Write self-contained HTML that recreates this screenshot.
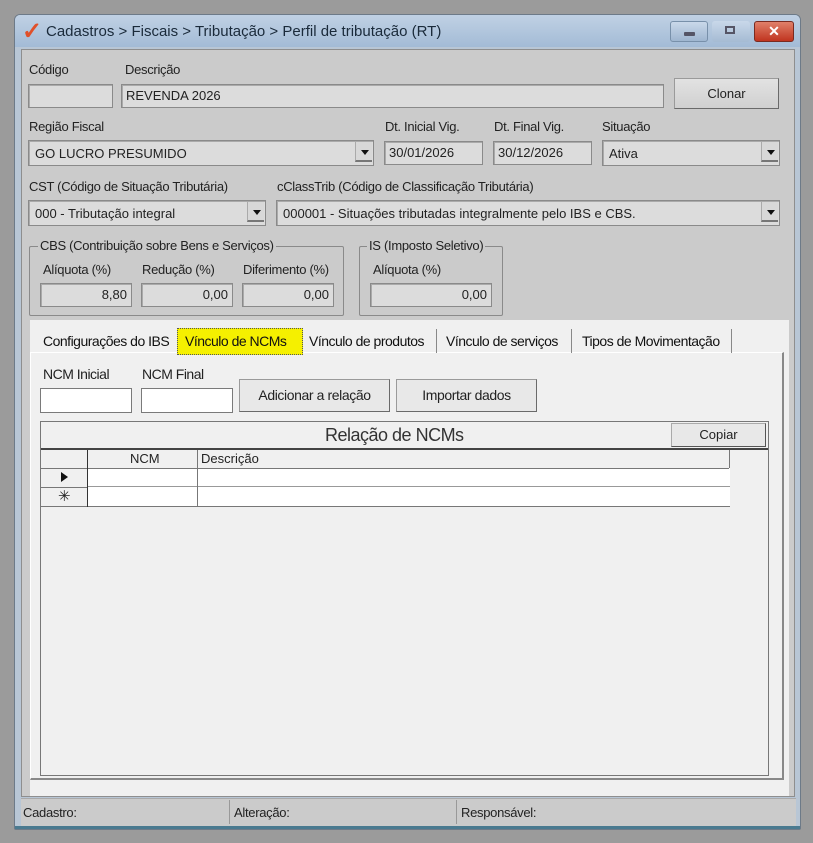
<!DOCTYPE html>
<html><head><meta charset="utf-8"><style>
*{box-sizing:border-box;margin:0;padding:0}
body{width:813px;height:843px;background:#9b9b9b;position:relative;overflow:hidden;font-family:"Liberation Sans",Arial,sans-serif;font-size:13px;color:#222}
.a{position:absolute}
.win{left:14px;top:14px;width:787px;height:816px;background:#b8c6d5;border:1px solid #6d7a88;border-radius:6px 6px 2px 2px}
.title{left:15px;top:15px;width:785px;height:32px;background:linear-gradient(#c0d1e4,#a3bbd6);border-radius:5px 5px 0 0}
.panel{left:21px;top:49px;width:774px;height:748px;background:#cbcbcb;border:1px solid #8e8e8e}
.lbl{font-size:13px;color:#222;letter-spacing:-0.3px}
.inp{background:#dcdcdc;border:1px solid #8a8a8a;box-shadow:inset 1px 1px 0 #aaa;height:24px;padding:3px 4px;font-size:13px}
.btn{background:linear-gradient(#e2e2e2,#d0d0d0);border:1px solid #9a9a9a;border-right-color:#6a6a6a;border-bottom-color:#6a6a6a;text-align:center;font-size:13px}
.dd{position:absolute;right:1px;top:1px;width:17px;height:20px;background:#d8d8d8;border-left:1px solid #aaa;border-bottom:2px solid #777}
.dd:after{content:"";position:absolute;left:5px;top:8px;border:4px solid transparent;border-top:5px solid #111}
.grp{border:1px solid #8a8a8a;border-radius:2px}
.gt{background:#cbcbcb;padding:0 2px;font-size:13px;letter-spacing:-0.3px}
.w{background:#fff;border:1px solid #7a7a7a;height:25px}
.tab{top:329px;height:24px;font-size:14px;padding:4px 5px;color:#111;border-right:1px solid #888;letter-spacing:-0.5px}
</style></head><body>
<div class="a win"></div>
<div class="a title"></div>
<div class="a" style="left:22px;top:20px;color:#e0502a;font-size:24px;font-weight:bold;line-height:24px">✓</div>
<div class="a" style="left:46px;top:23px;font-size:15px;color:#1a2a3a">Cadastros &gt; Fiscais &gt; Tributação &gt; Perfil de tributação (RT)</div>
<div class="a" style="left:670px;top:21px;width:38px;height:21px;border:1px solid #7890aa;border-radius:3px;background:linear-gradient(#c9d8ea,#9fb6d0)"><div class="a" style="left:13px;top:10px;width:11px;height:4px;background:#556;border-radius:1px"></div></div>
<div class="a" style="left:712px;top:21px;width:38px;height:21px;border-radius:3px;background:linear-gradient(#c9d8ea,#a5bbd3)"><div class="a" style="left:13px;top:5px;width:10px;height:8px;border:2px solid #556"></div></div>
<div class="a" style="left:754px;top:21px;width:40px;height:21px;border:1px solid #7a2a20;border-radius:3px;background:linear-gradient(#e0806a,#c0341f);color:#fff;font-weight:bold;text-align:center;font-size:14px;line-height:19px">✕</div>
<div class="a panel"></div>

<div class="a lbl" style="left:29px;top:62px">Código</div>
<div class="a lbl" style="left:125px;top:62px">Descrição</div>
<div class="a inp" style="left:28px;top:84px;width:85px"></div>
<div class="a inp" style="left:121px;top:84px;width:543px">REVENDA 2026</div>
<div class="a btn" style="left:674px;top:78px;width:105px;height:31px;line-height:29px">Clonar</div>

<div class="a lbl" style="left:29px;top:119px">Região Fiscal</div>
<div class="a lbl" style="left:385px;top:119px">Dt. Inicial Vig.</div>
<div class="a lbl" style="left:494px;top:119px">Dt. Final Vig.</div>
<div class="a lbl" style="left:602px;top:119px">Situação</div>
<div class="a inp" style="left:28px;top:140px;width:346px;height:26px;padding:5px 6px">GO LUCRO PRESUMIDO<div class="dd"></div></div>
<div class="a inp" style="left:384px;top:141px;width:99px">30/01/2026</div>
<div class="a inp" style="left:493px;top:141px;width:99px">30/12/2026</div>
<div class="a inp" style="left:602px;top:140px;width:178px;height:26px;padding:5px 6px">Ativa<div class="dd"></div></div>

<div class="a lbl" style="left:29px;top:179px">CST (Código de Situação Tributária)</div>
<div class="a lbl" style="left:277px;top:179px">cClassTrib (Código de Classificação Tributária)</div>
<div class="a inp" style="left:28px;top:200px;width:238px;height:26px;padding:5px 6px">000 - Tributação integral<div class="dd"></div></div>
<div class="a inp" style="left:276px;top:200px;width:504px;height:26px;padding:5px 6px">000001 - Situações tributadas integralmente pelo IBS e CBS.<div class="dd"></div></div>

<div class="a grp" style="left:29px;top:246px;width:315px;height:70px"></div>
<div class="a gt" style="left:38px;top:238px">CBS (Contribuição sobre Bens e Serviços)</div>
<div class="a grp" style="left:359px;top:246px;width:144px;height:70px"></div>
<div class="a gt" style="left:367px;top:238px">IS (Imposto Seletivo)</div>
<div class="a lbl" style="left:43px;top:262px">Alíquota (%)</div>
<div class="a lbl" style="left:142px;top:262px">Redução (%)</div>
<div class="a lbl" style="left:243px;top:262px">Diferimento (%)</div>
<div class="a lbl" style="left:373px;top:262px">Alíquota (%)</div>
<div class="a inp" style="left:40px;top:283px;width:92px;text-align:right">8,80</div>
<div class="a inp" style="left:141px;top:283px;width:92px;text-align:right">0,00</div>
<div class="a inp" style="left:242px;top:283px;width:92px;text-align:right">0,00</div>
<div class="a inp" style="left:370px;top:283px;width:122px;text-align:right">0,00</div>

<div class="a" style="left:30px;top:320px;width:759px;height:476px;background:#f0f0f0"></div>
<div class="a" style="left:30px;top:352px;width:754px;height:428px;background:#f0f0f0;border:1px solid #fff;border-right:2px solid #888;border-bottom:2px solid #888"></div>
<div class="a tab" style="left:38px;border:none">Configurações do IBS</div>
<div class="a tab" style="left:177px;top:328px;height:27px;width:126px;background:#f5f000;border:1px dotted #555;padding:4px 7px">Vínculo de NCMs</div>
<div class="a tab" style="left:304px;width:133px">Vínculo de produtos</div>
<div class="a tab" style="left:441px;width:131px">Vínculo de serviços</div>
<div class="a tab" style="left:577px;width:155px">Tipos de Movimentação</div>
<div class="a" style="left:436px;top:331px;width:1px;height:22px;background:#888"></div>

<div class="a" style="left:43px;top:366px;font-size:14px;letter-spacing:-0.5px">NCM Inicial</div>
<div class="a" style="left:142px;top:366px;font-size:14px;letter-spacing:-0.5px">NCM Final</div>
<div class="a w" style="left:40px;top:388px;width:92px"></div>
<div class="a w" style="left:141px;top:388px;width:92px"></div>
<div class="a btn" style="left:239px;top:379px;width:151px;height:33px;line-height:31px;background:#e8e8e8;font-size:14px;letter-spacing:-0.4px">Adicionar a relação</div>
<div class="a btn" style="left:396px;top:379px;width:141px;height:33px;line-height:31px;background:#e8e8e8;font-size:14px;letter-spacing:-0.4px">Importar dados</div>

<div class="a" style="left:40px;top:421px;width:729px;height:355px;border:1px solid #777;background:#f0f0f0"></div>
<div class="a" style="left:41px;top:448px;width:727px;height:2px;background:#444"></div>
<div class="a" style="left:325px;top:425px;font-size:18px;color:#333;letter-spacing:-0.5px">Relação de NCMs</div>
<div class="a btn" style="left:671px;top:423px;width:95px;height:24px;line-height:22px;background:#e8e8e8;border-color:#aaa #555 #555 #aaa">Copiar</div>
<div class="a" style="left:41px;top:450px;width:689px;height:57px;border-right:1px solid #777;border-bottom:1px solid #777"></div>
<div class="a" style="left:88px;top:468px;width:642px;height:38px;background:#fff"></div>
<div class="a" style="left:88px;top:486px;width:642px;height:1px;background:#999"></div>
<div class="a" style="left:41px;top:468px;width:688px;height:1px;background:#777"></div>
<div class="a" style="left:41px;top:487px;width:47px;height:1px;background:#777"></div>
<div class="a" style="left:87px;top:450px;width:1px;height:57px;background:#333"></div>
<div class="a" style="left:197px;top:450px;width:1px;height:57px;background:#777"></div>
<div class="a" style="left:130px;top:451px;font-size:13px">NCM</div>
<div class="a" style="left:201px;top:451px;font-size:13px">Descrição</div>
<div class="a" style="left:61px;top:472px;border:5px solid transparent;border-left:7px solid #111;border-right:0"></div>
<div class="a" style="left:58px;top:487px;font-size:15px">✳</div>

<div class="a" style="left:21px;top:798px;width:775px;height:28px;background:#cbcbcb;border-top:1px solid #aaa"></div>
<div class="a" style="left:229px;top:800px;width:1px;height:24px;background:#999"></div>
<div class="a" style="left:456px;top:800px;width:1px;height:24px;background:#999"></div>
<div class="a lbl" style="left:23px;top:805px">Cadastro:</div>
<div class="a lbl" style="left:234px;top:805px">Alteração:</div>
<div class="a lbl" style="left:461px;top:805px">Responsável:</div>
<div class="a" style="left:15px;top:826px;width:785px;height:3px;background:#4a7a90"></div>
</body></html>
